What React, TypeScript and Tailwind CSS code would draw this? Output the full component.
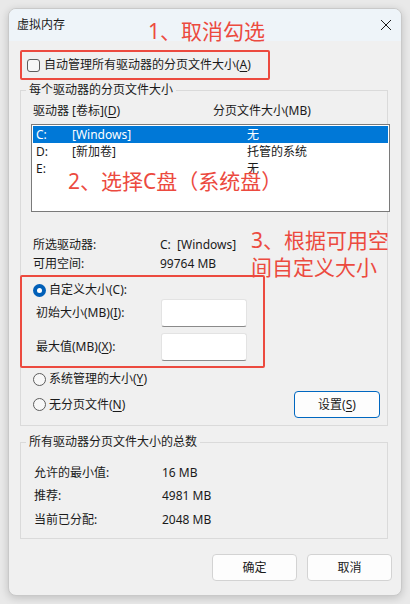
import React from "react";

const FONT = { fontFamily: '"Noto Sans", "Noto Sans CJK SC", sans-serif' };
const RED = "#ec4a3f";

function U({ c }: { c: string }) {
  return <span className="underline underline-offset-2">{c}</span>;
}

function Radio({ checked }: { checked?: boolean }) {
  return checked ? (
    <span className="flex h-[13px] w-[13px] items-center justify-center rounded-full bg-[#005fb8]">
      <span className="h-[5px] w-[5px] rounded-full bg-white" />
    </span>
  ) : (
    <span className="h-[13px] w-[13px] rounded-full border border-[#5d5d5d] bg-[#f7f7f7]" />
  );
}

function Group({ title, className, children }: { title: string; className: string; children: React.ReactNode }) {
  return (
    <div className={"relative ml-[11px] w-[368px] border border-[#dadada] " + className}>
      <span className="absolute -top-[9px] left-[5px] bg-[#f0f0f0] px-[3px] text-[12px] leading-[16px] text-[#1a1a1a]">
        {title}
      </span>
      {children}
    </div>
  );
}

export default function App() {
  return (
    <div className="h-[604px] w-[410px] bg-[#e9e9e9] p-[8px]" style={FONT}>
      <div className="relative h-[588px] w-[394px] overflow-hidden rounded-[8px] border border-[#c9c9c9] bg-[#f0f0f0] text-[12px] text-[#1a1a1a] shadow-[0_2px_8px_rgba(0,0,0,0.18)]">
        {/* title bar */}
        <div className="flex h-[32px] items-center justify-between bg-[#eef4f9] pl-[8px] pr-[8px]">
          <span className="text-[12px] leading-[16px]">虚拟内存</span>
          <svg width="12" height="12" viewBox="0 0 12 12" className="mr-[1px]">
            <path d="M1 1L11 11M11 1L1 11" stroke="#1a1a1a" strokeWidth="1" />
          </svg>
        </div>

        {/* red box 1 */}
        <div className="ml-[11px] mt-[9px] flex h-[30px] w-[250px] items-center rounded-[2px] border-2 border-[#ec4a3f] pl-[5px]">
          <span className="h-[13px] w-[13px] rounded-[3px] border border-[#5d5d5d] bg-[#f7f7f7]" />
          <span className="ml-[4px] leading-[16px]">
            自动管理所有驱动器的分页文件大小(<U c="A" />)
          </span>
        </div>

        {/* group 1 */}
        <Group title="每个驱动器的分页文件大小" className="mt-[10px] h-[336px]">
          <div className="flex pl-[12px] pt-[12px] leading-[16px]">
            <span className="w-[180px]">
              驱动器 [卷标](<U c="D" />)
            </span>
            <span>分页文件大小(MB)</span>
          </div>
          <div className="ml-[10px] mt-[5px] h-[88px] w-[359px] border border-[#7a7a7a] bg-white p-[1px]">
            {[
              ["C:", "[Windows]", "无", true],
              ["D:", "[新加卷]", "托管的系统", false],
              ["E:", "", "无", false],
            ].map(([d, l, s, sel]) => (
              <div
                key={d as string}
                className={
                  "flex h-[17px] items-center pl-[3px] leading-[17px] " +
                  (sel ? "bg-[#0078d7] text-white" : "text-[#1a1a1a]")
                }
              >
                <span className="w-[36px]">{d}</span>
                <span className="w-[175px]">{l}</span>
                <span>{s}</span>
              </div>
            ))}
          </div>

          <div className="mt-[23px] flex h-[19px] items-center pl-[12px]">
            <span className="w-[127px]">所选驱动器:</span>
            <span>C:&nbsp;&nbsp;[Windows]</span>
          </div>
          <div className="flex h-[19px] items-center pl-[12px]">
            <span className="w-[127px]">可用空间:</span>
            <span>99764 MB</span>
          </div>

          {/* red box 2 */}
          <div className="-ml-[1px] mt-[2px] h-[93px] w-[245px] rounded-[2px] border-2 border-[#ec4a3f] pb-[5px]">
            <div className="mt-[5px] flex h-[16px] items-center pl-[11px]">
              <Radio checked />
              <span className="ml-[3px]">自定义大小(C):</span>
            </div>
            <div className="mt-[1px] flex h-[28px] items-center pl-[14px]">
              <span className="w-[125px]">
                初始大小(MB)(<U c="I" />):
              </span>
              <div className="h-[28px] w-[86px] rounded-[3px] border border-[#e3e3e3] border-b-[#8a8a8a] bg-white" />
            </div>
            <div className="mt-[6px] flex h-[28px] items-center pl-[14px]">
              <span className="w-[125px]">
                最大值(MB)(<U c="X" />):
              </span>
              <div className="h-[28px] w-[86px] rounded-[3px] border border-[#e3e3e3] border-b-[#8a8a8a] bg-white" />
            </div>
          </div>

          <div className="mt-[3px] flex h-[16px] items-center pl-[12px]">
            <Radio />
            <span className="ml-[3px]">
              系统管理的大小(<U c="Y" />)
            </span>
          </div>
          <div className="mt-[4px] flex h-[27px] items-center justify-between pl-[12px] pr-[7px]">
            <div className="flex items-center">
              <Radio />
              <span className="ml-[3px]">
                无分页文件(<U c="N" />)
              </span>
            </div>
            <div className="flex h-[27px] w-[86px] items-center justify-center rounded-[4px] border border-[#0067c0] bg-[#fdfdfd]">
              设置(<U c="S" />)
            </div>
          </div>
        </Group>

        {/* group 2 */}
        <Group title="所有驱动器分页文件大小的总数" className="mt-[16px] h-[97px]">
          <div className="pl-[13px] pt-[18px]">
            {[
              ["允许的最小值:", "16 MB"],
              ["推荐:", "4981 MB"],
              ["当前已分配:", "2048 MB"],
            ].map(([a, b]) => (
              <div key={a} className="flex h-[23.5px] items-center">
                <span className="w-[128px]">{a}</span>
                <span>{b}</span>
              </div>
            ))}
          </div>
        </Group>

        {/* buttons */}
        <div className="mr-[9px] mt-[15px] flex justify-end gap-[10px]">
          <div className="flex h-[27px] w-[85px] items-center justify-center rounded-[4px] border border-[#d3d3d3] bg-[#fdfdfd]">
            确定
          </div>
          <div className="flex h-[27px] w-[85px] items-center justify-center rounded-[4px] border border-[#d3d3d3] bg-[#fdfdfd]">
            取消
          </div>
        </div>

        {/* annotations */}
        <span
          className="absolute left-[139px] top-[8px] whitespace-nowrap text-[21px] leading-[28px]"
          style={{ color: RED }}
        >
          1、取消勾选
        </span>
        <span
          className="absolute left-[59px] top-[158px] whitespace-nowrap text-[21px] leading-[28px]"
          style={{ color: RED }}
        >
          2、选择C盘（系统盘）
        </span>
        <span
          className="absolute left-[242px] top-[218px] w-[140px] text-[21px] leading-[27px]"
          style={{ color: RED }}
        >
          3、根据可用空
          <br />
          间自定义大小
        </span>
      </div>
    </div>
  );
}
